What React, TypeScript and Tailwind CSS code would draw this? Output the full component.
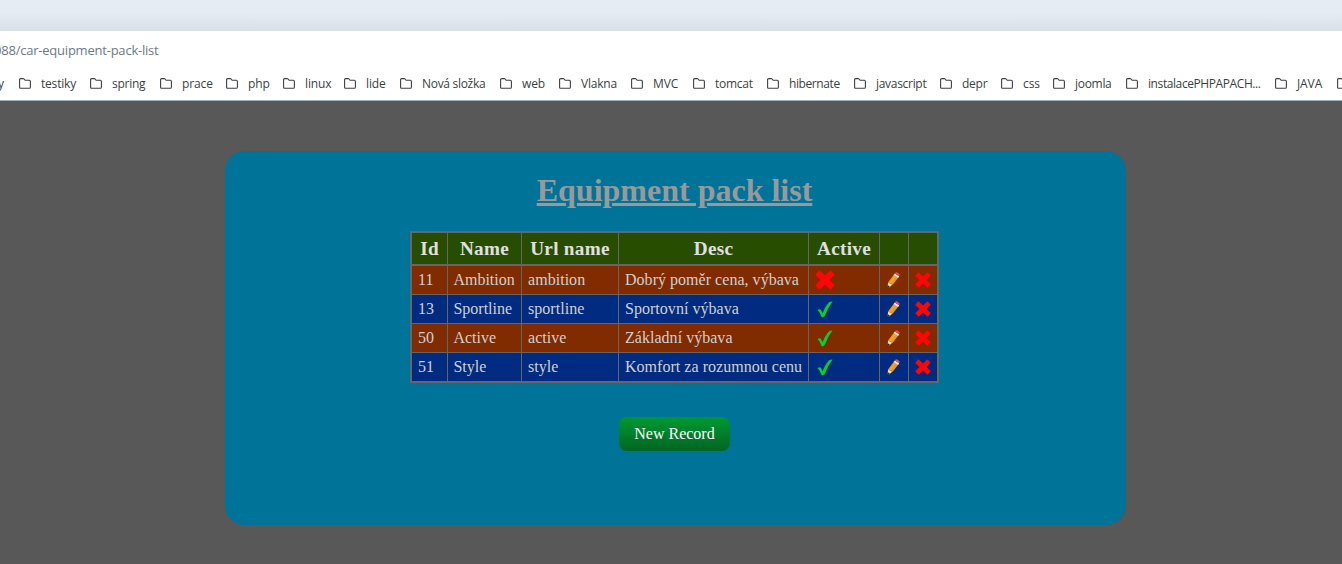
const bookmarks = [
  { label: 'testiky', width: 'w-[71px]', tracking: 'tracking-[-0.2px]' },
  { label: 'spring', width: 'w-[70px]', tracking: 'tracking-[-0.25px]' },
  { label: 'prace', width: 'w-[66px]', tracking: 'tracking-[-0.1px]' },
  { label: 'php', width: 'w-[57px]', tracking: 'tracking-[-0.1px]' },
  { label: 'linux', width: 'w-[61px]', tracking: 'tracking-[-0.15px]' },
  { label: 'lide', width: 'w-[56px]', tracking: 'tracking-[-0.1px]' },
  { label: 'Nová složka', width: 'w-[100px]', tracking: 'tracking-[-0.3px]' },
  { label: 'web', width: 'w-[59px]', tracking: 'tracking-[-0.1px]' },
  { label: 'Vlakna', width: 'w-[72px]', tracking: 'tracking-[-0.2px]' },
  { label: 'MVC', width: 'w-[62px]', tracking: 'tracking-[-0.1px]' },
  { label: 'tomcat', width: 'w-[74px]', tracking: 'tracking-[-0.25px]' },
  { label: 'hibernate', width: 'w-[87px]', tracking: 'tracking-[-0.4px]' },
  { label: 'javascript', width: 'w-[86px]', tracking: 'tracking-[-0.3px]' },
  { label: 'depr', width: 'w-[61px]', tracking: 'tracking-[-0.25px]' },
  { label: 'css', width: 'w-[52px]', tracking: 'tracking-[-0.1px]' },
  { label: 'joomla', width: 'w-[73px]', tracking: 'tracking-[-0.3px]' },
  { label: 'instalacePHPAPACH...', width: 'w-[149px]', tracking: 'tracking-[-0.41px]' },
  { label: 'JAVA', width: 'w-[62px]', tracking: 'tracking-[-0.1px]' },
  { label: '', width: 'w-[22px]', tracking: '' },
];

const packs = [
  { id: 11, name: 'Ambition', url: 'ambition', desc: 'Dobrý poměr cena, výbava', active: false },
  { id: 13, name: 'Sportline', url: 'sportline', desc: 'Sportovní výbava', active: true },
  { id: 50, name: 'Active', url: 'active', desc: 'Základní výbava', active: true },
  { id: 51, name: 'Style', url: 'style', desc: 'Komfort za rozumnou cenu', active: true },
];

const headings = ['Id', 'Name', 'Url name', 'Desc', 'Active', '', ''];

function Folder() {
  return (
    <svg className="h-[11px] w-3 shrink-0" viewBox="0 0 12 11" fill="none" stroke="#3c3f43" strokeWidth="1.1">
      <path d="M.6 1.7Q.6.6 1.7.6H4.2Q4.8.6 5.1 1L6.1 2.3H10.3Q11.4 2.3 11.4 3.4V9.2Q11.4 10.3 10.3 10.3H1.7Q.6 10.3.6 9.2Z" />
    </svg>
  );
}

function Cross({ className }: { className: string }) {
  return (
    <svg className={className} viewBox="0 0 20 20" fill="#ff0505">
      <path d="M4.8.6 10 5.6 15 .8Q15.7.3 16.3.9L19.3 4Q19.8 4.6 19.2 5.2L14.4 10 19.3 14.7Q19.9 15.3 19.3 15.9L16 19.3Q15.4 19.8 14.8 19.2L10 14.5 5.2 19.3Q4.6 19.8 4 19.2L.7 16Q.2 15.4.8 14.8L5.6 10 .7 5.2Q.2 4.6.8 4L3.8.7Q4.3.2 4.8.6Z" />
    </svg>
  );
}

function Check() {
  return (
    <svg className="ml-0.5 h-[17px] w-4" viewBox="0 0 16 17" fill="#00d42a">
      <path d="M.5 9.3Q2.5 7.5 3.8 8.8L5.6 12.2Q8.7 4.5 12.2 1.2 13.4.3 15.5.4 11 6.2 8.2 14.1 7.7 16 5.3 16.4 4.6 16.5 4.2 15.3 2.4 10.2.5 9.3Z" />
    </svg>
  );
}

function Pencil() {
  return (
    <svg className="h-4 w-[13px]" viewBox="0 0 13 16">
      <path d="M1.2 10.2 5.3 12.8 2 15.5.5 15Z" fill="#f4dfbd" />
      <path d="M.7 12.9 2.9 14.7 1.2 15.7.3 15.2Z" fill="#252525" />
      <path d="M6.8 2.7 11.3 5.5 5.5 13.1 4.3 11.8 2.9 11.8 1.2 10.2Z" fill="#ee991c" />
      <path d="M8.4 4 2.7 11.5" stroke="#f6ac35" strokeWidth="1" />
      <path d="M7.8 1.4 12.2 4.2 11.1 5.9 6.6 3.1Z" fill="#e8e8e8" />
      <path d="M7.8 1.4Q8.8-.2 10.2.4L12.1 1.7Q13.1 2.6 12.2 4.2Z" fill="#ed4b50" />
    </svg>
  );
}

export default function App() {
  return (
    <div className="flex h-[564px] w-full flex-col overflow-hidden bg-[#585858]">
      <header className="shrink-0 font-['Open_Sans','Noto_Sans',sans-serif]">
        <div className="h-[31px] bg-linear-to-b from-[#e5ecf4] from-40% to-[#d9e0e8]" />
        <div className="flex h-[39px] items-center overflow-hidden bg-white">
          <span className="-ml-[6px] text-[13px] leading-none tracking-[-0.22px] whitespace-nowrap text-[#6c7b89]">
            088/car-equipment-pack-list
          </span>
        </div>
        <nav className="flex h-[31px] overflow-hidden border-b border-[#9eb0bd] bg-white pb-[3px] text-[12px] whitespace-nowrap text-[#3c3f43]">
          <span className="-ml-[2px] flex w-[21px] shrink-0 items-center">y</span>
          {bookmarks.map((b, i) => (
            <a key={i} className={`flex shrink-0 items-center gap-[10px] ${b.width}`}>
              <Folder />
              <span className={b.tracking}>{b.label}</span>
            </a>
          ))}
        </nav>
      </header>

      <main className="mt-[50px] ml-[225px] flex h-[374px] w-[901px] shrink-0 flex-col items-center rounded-[20px] bg-[#007399] pr-[2px] font-['Liberation_Serif',serif]">
        <h1 className="mt-[21px] h-[37px] text-[32px] leading-[37px] font-bold whitespace-nowrap text-[#999999] underline">
          Equipment pack list
        </h1>
        <table className="mt-[22px] w-[529px] table-fixed border-separate border-spacing-0 border-2 border-[#666666] text-[16px] leading-[18px] whitespace-nowrap text-[#d0d0d0]">
          <colgroup>
            <col className="w-[36px]" />
            <col className="w-[74px]" />
            <col className="w-[97px]" />
            <col className="w-[190px]" />
            <col className="w-[71px]" />
            <col className="w-[29px]" />
            <col className="w-[28px]" />
          </colgroup>
          <thead>
            <tr className="h-[33px] bg-[#264d00] text-[19.2px] tracking-[0.3px] text-[#e0e0e0]">
              {headings.map((h, i) => (
                <th key={i} className="border-r border-b-2 border-[#666666] p-0 font-bold last:border-r-0">
                  {h}
                </th>
              ))}
            </tr>
          </thead>
          <tbody className="[&_td]:border-r [&_td]:border-b [&_td]:border-[#666666] [&_td]:py-0 [&_td]:pr-0 [&_td]:pl-[6px] [&_td:last-child]:border-r-0 [&_tr:last-child_td]:border-b-0">
            {packs.map((p) => (
              <tr key={p.id} className="h-[29px] odd:bg-[#802b00] even:bg-[#002b80] last:h-[28px]">
                <td>{p.id}</td>
                <td>
                  <div className="-ml-[0.6px]">{p.name}</div>
                </td>
                <td className="tracking-[0.04px]">{p.url}</td>
                <td className="tracking-[0.03px]">{p.desc}</td>
                <td>{p.active ? <Check /> : <Cross className="h-5 w-5" />}</td>
                <td>
                  <div className="pl-px">
                    <Pencil />
                  </div>
                </td>
                <td>
                  <Cross className="h-4 w-4" />
                </td>
              </tr>
            ))}
          </tbody>
        </table>
        <button className="mt-[34px] h-[34px] w-[111px] rounded-[8px] bg-linear-to-b from-[#009933] to-[#006622] text-[16px] whitespace-nowrap text-white">
          New Record
        </button>
      </main>
    </div>
  );
}
